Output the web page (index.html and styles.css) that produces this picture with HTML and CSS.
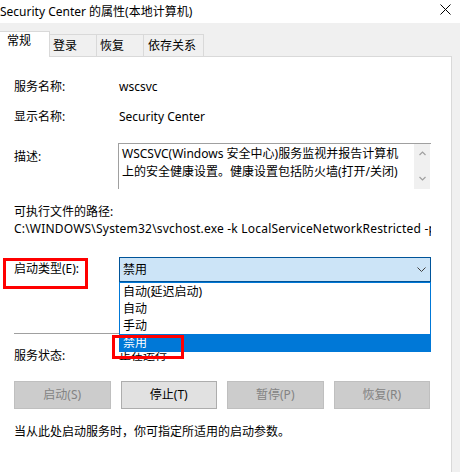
FILE: index.html
```html
<!DOCTYPE html>
<html lang="zh-CN">
<head>
<meta charset="utf-8">
<title>Security Center 的属性(本地计算机)</title>
<link rel="stylesheet" href="styles.css">
</head>
<body>
<div class="window">
  <div class="titlebar">
    <span class="title">Security Center 的属性(本地计算机)</span>
    <svg class="close" width="11" height="11" viewBox="0 0 11 11"><path d="M0.5 0.5 L10.5 10.5 M10.5 0.5 L0.5 10.5" stroke="#000" stroke-width="1" fill="none"/></svg>
  </div>
  <div class="tabs">
    <div class="tab active">常规</div>
    <div class="tab t2">登录</div>
    <div class="tab t3">恢复</div>
    <div class="tab t4">依存关系</div>
  </div>
  <div class="panel">
    <div class="field r1"><span>服务名称:</span><span>wscsvc</span></div>
    <div class="field r2"><span>显示名称:</span><span>Security Center</span></div>
    <div class="field r3">
      <span class="desc-label">描述:</span>
      <div class="textbox">
        <div class="textbox-text">
          <div>WSCSVC(Windows 安全中心)服务监视并报告计算机</div>
          <div>上的安全健康设置。健康设置包括防火墙(打开/关闭)</div>
        </div>
        <div class="scrollbar">
          <svg width="7" height="5" viewBox="0 0 7 5"><path d="M0.5 4 L3.5 1 L6.5 4" stroke="#a0a0a0" stroke-width="1.2" fill="none"/></svg>
          <svg width="7" height="5" viewBox="0 0 7 5"><path d="M0.5 1 L3.5 4 L6.5 1" stroke="#a0a0a0" stroke-width="1.2" fill="none"/></svg>
        </div>
      </div>
    </div>
    <div class="path-label">可执行文件的路径:</div>
    <div class="path">C:\WINDOWS\System32\svchost.exe -k LocalServiceNetworkRestricted -p</div>
    <div class="field r6">
      <span class="startup-label">启动类型(E):</span>
      <div class="combo">
        <div class="combo-box">
          <span>禁用</span>
          <svg width="9" height="5" viewBox="0 0 9 5"><path d="M0.5 0.5 L4.5 4.5 L8.5 0.5" stroke="#404040" stroke-width="1" fill="none"/></svg>
        </div>
        <ul class="combo-list">
          <li>自动(延迟启动)</li>
          <li>自动</li>
          <li>手动</li>
          <li class="selected">禁用</li>
        </ul>
        <div class="mark"></div>
      </div>
    </div>
    <div class="separator"></div>
    <div class="field r7"><span>服务状态:</span><span>正在运行</span></div>
    <div class="buttons">
      <div class="btn disabled">启动(S)</div>
      <div class="btn">停止(T)</div>
      <div class="btn disabled">暂停(P)</div>
      <div class="btn disabled">恢复(R)</div>
    </div>
    <div class="hint">当从此处启动服务时，你可指定所适用的启动参数。</div>
  </div>
</div>
</body>
</html>
```
FILE: styles.css
```css
*, *::before, *::after { box-sizing: border-box; }
html, body { margin: 0; padding: 0; }
body {
  width: 460px;
  height: 472px;
  overflow: hidden;
  background: #f0f0f0;
  font-family: "Noto Sans", "Noto Sans CJK SC", sans-serif;
  font-size: 12px;
  line-height: 16px;
  color: #000;
}
.window { width: 460px; height: 472px; overflow: hidden; }
.titlebar {
  height: 23px;
  background: #fff;
  display: flex;
  align-items: center;
  justify-content: space-between;
}
.title { white-space: nowrap; }
.close { margin-right: 9px; margin-top: -4px; }

.tabs {
  height: 33px;
  display: flex;
  align-items: flex-end;
  position: relative;
  z-index: 2;
}
.tab {
  height: 22px;
  border-top: 1px solid #d9d9d9;
  border-right: 1px solid #d9d9d9;
  background: #f0f0f0;
  padding-top: 3px;
  white-space: nowrap;
}
.tab.active {
  height: 26px;
  margin-left: -1px;
  margin-bottom: -1px;
  width: 51px;
  border-left: 1px solid #d9d9d9;
  background: #fff;
  padding-left: 7px;
  padding-top: 1px;
}
.t2 { width: 47px; padding-left: 3px; }
.t3 { width: 47px; padding-left: 3px; }
.t4 { width: 60px; padding-left: 4px; }

.panel {
  margin-left: -1px;
  width: 453px;
  height: 430px;
  background: #fff;
  border: 1px solid #d9d9d9;
  padding: 22px 0 0 14px;
  position: relative;
}
.field {
  display: grid;
  grid-template-columns: 105px 1fr;
  white-space: nowrap;
}
.r2 { margin-top: 14px; }
.r3 { margin-top: 18px; height: 46px; }
.desc-label { padding-top: 6px; }
.textbox {
  margin-left: -1px;
  width: 313px;
  height: 46px;
  border-top: 1px solid #a0a0a0;
  border-left: 1px solid #a0a0a0;
  display: flex;
  justify-content: space-between;
}
.textbox-text { padding: 1px 0 0 3px; line-height: 18px; }
.scrollbar {
  width: 16px;
  height: 45px;
  margin-right: 1px;
  background: #f0f0f0;
  display: flex;
  flex-direction: column;
  align-items: center;
  justify-content: space-between;
  padding: 7px 0 8px;
}
.path-label { margin-top: 15px; }
.path { margin-top: 1px; white-space: nowrap; overflow: hidden; width: 417px; letter-spacing: 0.2px; }

.r6 { margin-top: 20px; }
.startup-label { padding-top: 4px; position: relative; }
.startup-label::before {
  content: "";
  position: absolute;
  left: -11px;
  top: 1px;
  width: 85px;
  height: 31px;
  border: 3px solid #ff0000;
}
.combo { position: relative; width: 312px; }
.combo-box {
  height: 25px;
  background: #cce4f7;
  border: 1px solid #005499;
  display: flex;
  align-items: center;
  justify-content: space-between;
  padding: 0 4px 0 3px;
}
.combo-list {
  position: absolute;
  left: 0;
  top: 25px;
  width: 312px;
  margin: 0;
  padding: 0;
  list-style: none;
  background: #fff;
  border: 1px solid #0078d7;
  z-index: 3;
}
.combo-list li { height: 17px; line-height: 17px; padding-left: 3px; }
.combo-list li.selected { background: #0078d7; color: #fff; }
.mark {
  position: absolute;
  left: -7px;
  top: 78px;
  width: 72px;
  height: 24px;
  border: 3px solid #ff0000;
  z-index: 4;
}

.separator { margin-top: 51px; height: 1px; width: 417px; background: #a0a0a0; }
.r7 { margin-top: 14px; }
.buttons {
  margin-top: 17px;
  width: 416px;
  display: grid;
  grid-template-columns: repeat(4, 1fr);
  column-gap: 10px;
}
.btn {
  height: 28px;
  background: #e1e1e1;
  border: 1px solid #adadad;
  display: flex;
  align-items: center;
  justify-content: center;
}
.btn.disabled { background: #cccccc; border-color: #bfbfbf; color: #838383; }
.hint { margin-top: 15px; white-space: nowrap; }
```
